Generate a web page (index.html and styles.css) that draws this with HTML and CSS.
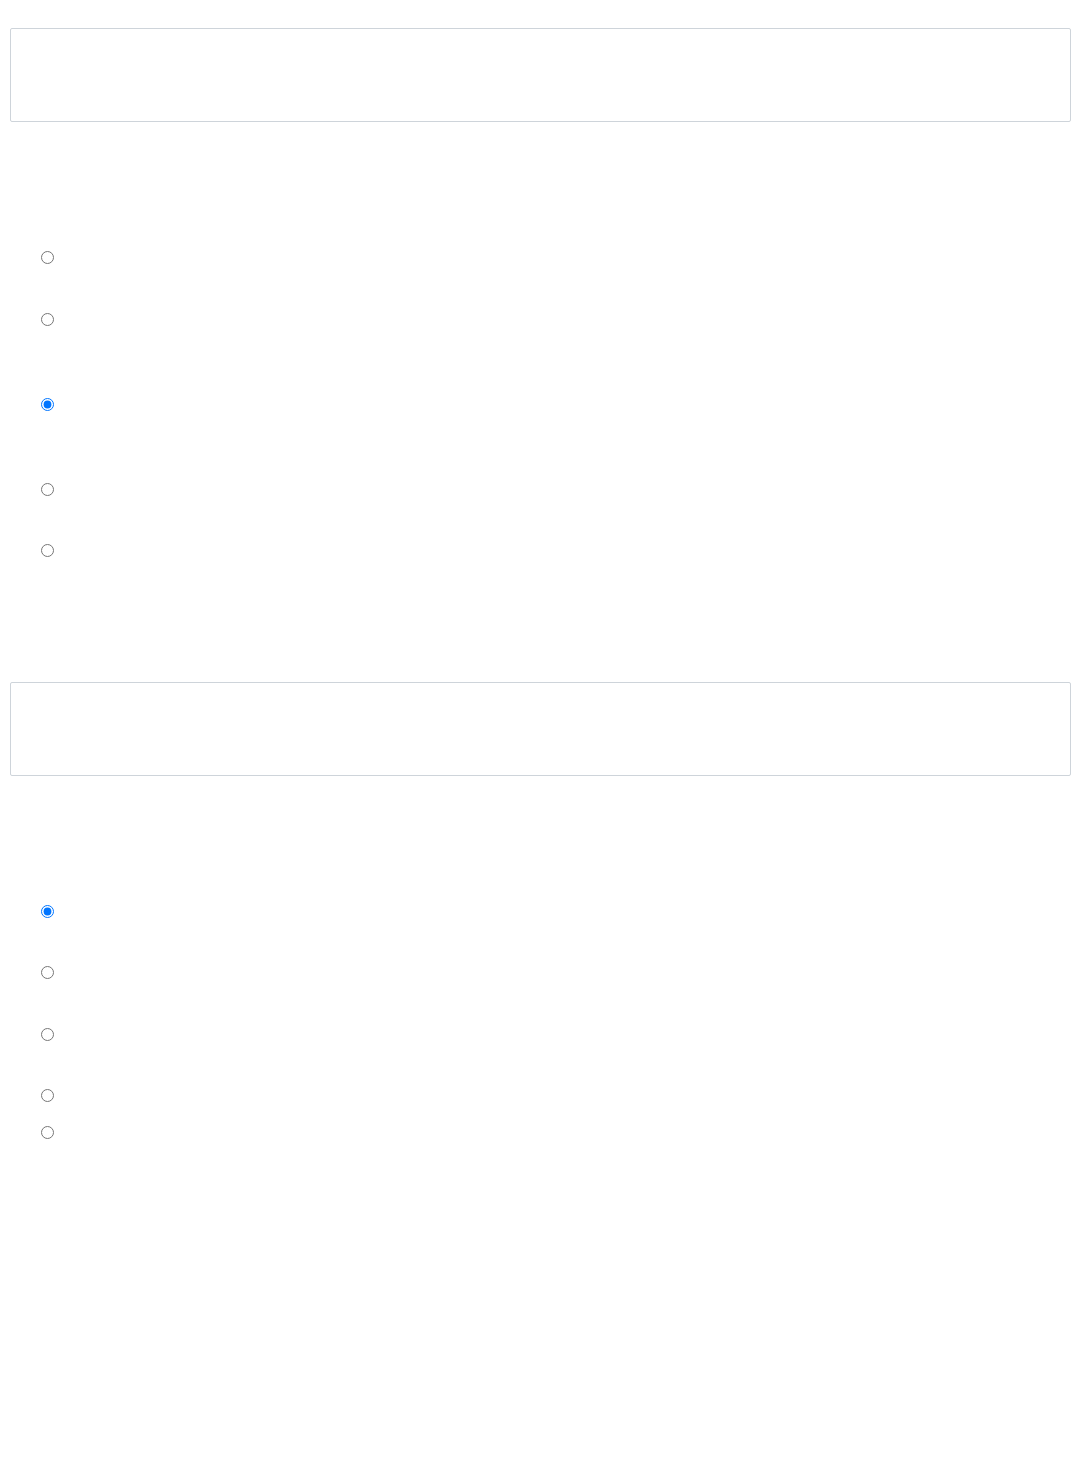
FILE: index.html
```html
<!DOCTYPE html>
<html lang="en">
<head>
<meta charset="utf-8">
<title>Form</title>
<link rel="stylesheet" href="styles.css">
</head>
<body>
<div class="page">
  <div class="field-box"></div>
  <div class="group group-first">
    <label class="opt"><input type="radio" name="g1"></label>
    <label class="opt m49"><input type="radio" name="g1"></label>
    <label class="opt m72"><input type="radio" name="g1" checked></label>
    <label class="opt m72"><input type="radio" name="g1"></label>
    <label class="opt m48"><input type="radio" name="g1"></label>
  </div>
  <div class="field-box box-second"></div>
  <div class="group group-first">
    <label class="opt"><input type="radio" name="g2" checked></label>
    <label class="opt m48"><input type="radio" name="g2"></label>
    <label class="opt m49"><input type="radio" name="g2"></label>
    <label class="opt m48"><input type="radio" name="g2"></label>
    <label class="opt m24"><input type="radio" name="g2"></label>
  </div>
</div>
</body>
</html>
```
FILE: styles.css
```css
html, body {
  margin: 0;
  padding: 0;
  background: #fff;
  font-family: "Liberation Sans", Arial, sans-serif;
}
.page {
  padding: 28px 8px 0 10px;
}
.field-box {
  box-sizing: border-box;
  width: 1061px;
  height: 94px;
  border: 1px solid #ced4da;
  border-radius: 2px;
  background: #fff;
}
.box-second {
  margin-top: 125px;
}
.group {
  display: flex;
  flex-direction: column;
  padding-left: 31px;
}
.group-first {
  margin-top: 129px;
}
.opt {
  display: flex;
  height: 13px;
}
.opt input {
  margin: 0;
  width: 13px;
  height: 13px;
}
.m24 { margin-top: 24px; }
.m48 { margin-top: 48px; }
.m49 { margin-top: 49px; }
.m72 { margin-top: 72px; }
```
